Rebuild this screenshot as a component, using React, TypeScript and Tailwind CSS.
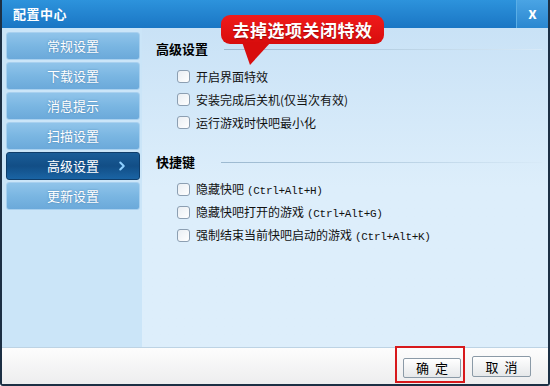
import { ChevronRight } from "lucide-react";

const navItems = ["常规设置", "下载设置", "消息提示", "扫描设置", "高级设置", "更新设置"];

const advanced = ["开启界面特效", "安装完成后关机(仅当次有效)", "运行游戏时快吧最小化"];

const hotkeys = [
    { label: "隐藏快吧", key: "(Ctrl+Alt+H)" },
    { label: "隐藏快吧打开的游戏", key: "(Ctrl+Alt+G)" },
    { label: "强制结束当前快吧启动的游戏", key: "(Ctrl+Alt+K)" },
];

function Checkbox() {
    return (
        <span className="w-[13px] h-[13px] shrink-0 rounded-[3px] border border-[#8c9fb2] bg-gradient-to-br from-[#e9eef3] to-white" />
    );
}

function SectionTitle({ text, lineLeft }: { text: string; lineLeft: string }) {
    return (
        <div className="flex items-center h-[18px]">
            <span className="font-bold text-[13px] text-black">{text}</span>
            <span className={`h-px flex-1 bg-gradient-to-r from-[#9cb9d0] via-[#b6cfe2] to-[#d8eaf8] ${lineLeft}`} />
        </div>
    );
}

export default function App() {
    return (
        <div
            className="w-[550px] h-[386px] flex flex-col bg-[#ddeefb] border-x-2 border-b-2 border-[#1c2f44] rounded-b-[3px] overflow-hidden relative"
            style={{ fontFamily: '"Noto Sans CJK SC", "Liberation Sans", sans-serif' }}
        >
            {/* title bar */}
            <div className="h-[28px] shrink-0 flex items-stretch bg-gradient-to-b from-[#2d93dc] to-[#1a76c4]">
                <div className="flex-1 flex items-center pl-[11px] text-white font-bold text-[13px] tracking-[0.5px]">
                    配置中心
                </div>
                <div className="w-[32px] flex items-center justify-center bg-gradient-to-b from-[#4aa4e4] to-[#2a87d0] border-l border-[#5aaee6]">
                    <span className="text-white font-bold text-[15px] leading-none -mt-[3px]">x</span>
                </div>
            </div>

            <div className="flex flex-1 min-h-0">
                {/* sidebar */}
                <div className="w-[140px] shrink-0 bg-[#cbe5f8] pt-[4px] pl-[4px] pr-[2px] flex flex-col gap-[2px]">
                    {navItems.map((item) => {
                        const active = item === "高级设置";
                        return (
                            <div
                                key={item}
                                className={
                                    active
                                        ? "h-[28px] relative flex items-center justify-center rounded-[3px] border border-[#0f3d6a] bg-gradient-to-b from-[#1a5d98] via-[#124e86] to-[#1a64a4] text-white text-[13px]"
                                        : "h-[28px] relative flex items-center justify-center rounded-[3px] border border-[#a8d0ef] bg-gradient-to-b from-[#90c4ea] via-[#7ab6e2] to-[#6ba9da] text-white text-[13px]"
                                }
                            >
                                <span className="[text-shadow:0_0_2px_rgba(40,90,140,0.6)]">{item}</span>
                                {active && (
                                    <ChevronRight
                                        className="absolute right-[10px] w-[14px] h-[14px] text-[#8fd0ff]"
                                        strokeWidth={3.5}
                                    />
                                )}
                            </div>
                        );
                    })}
                </div>

                {/* content */}
                <div className="flex-1 bg-gradient-to-b from-[#c9e2f6] via-[#ddeefb] to-[#ddeefb] pt-[12px] pl-[14px] pr-[6px] text-[12px] text-[#111]">
                    <SectionTitle text="高级设置" lineLeft="ml-[16px]" />
                    <div className="flex flex-col gap-[10px] mt-[12px] pl-[21px]">
                        {advanced.map((t) => (
                            <label key={t} className="flex items-center gap-[6px] h-[13px]">
                                <Checkbox />
                                <span>{t}</span>
                            </label>
                        ))}
                    </div>

                    <div className="mt-[24px]">
                        <SectionTitle text="快捷键" lineLeft="ml-[26px]" />
                    </div>
                    <div className="flex flex-col gap-[10px] mt-[12px] pl-[21px]">
                        {hotkeys.map((h) => (
                            <label key={h.label} className="flex items-center gap-[6px] h-[13px]">
                                <Checkbox />
                                <span>
                                    {h.label}
                                    <span
                                        className="text-[11px] tracking-[-0.3px] ml-[3px]"
                                        style={{ fontFamily: '"Liberation Mono", monospace' }}
                                    >
                                        {h.key}
                                    </span>
                                </span>
                            </label>
                        ))}
                    </div>
                </div>
            </div>

            {/* footer */}
            <div className="h-[37px] shrink-0 border-t border-[#bdd3e4] bg-gradient-to-b from-[#fdfdfd] to-[#ededee] flex items-center justify-end pr-[17px] gap-[7px]">
                <div className="border-2 border-[#d7191c] pl-[6px] pr-[2px] pt-[6px] pb-[3px] -mt-[3px]">
                    <button className="w-[58px] h-[20px] rounded-[2px] border border-[#8b9aa7] bg-gradient-to-b from-white to-[#e6e8ea] text-[13px] leading-none text-black tracking-[6px] pl-[6px]">
                        确定
                    </button>
                </div>
                <button className="w-[59px] h-[21px] rounded-[2px] border border-[#8b9aa7] bg-gradient-to-b from-white to-[#e6e8ea] text-[13px] leading-none text-black tracking-[6px] pl-[6px]">
                    取消
                </button>
            </div>

            {/* annotation bubble */}
            <div className="absolute left-[219px] top-[15px]">
                <div className="relative w-[163px] h-[29px] rounded-[9px] bg-gradient-to-b from-[#f01a1a] to-[#d80d0d] flex items-center justify-center text-white font-bold text-[17px] tracking-[0.5px] [text-shadow:0_1px_1px_rgba(90,0,0,0.5)]">
                    去掉选项关闭特效
                </div>
                <svg className="absolute left-[18px] top-[27px]" width="40" height="26" viewBox="0 0 40 26">
                    <path d="M3 0 L11 23 L32 0 Z" fill="#d80d0d" />
                </svg>
            </div>
        </div>
    );
}
